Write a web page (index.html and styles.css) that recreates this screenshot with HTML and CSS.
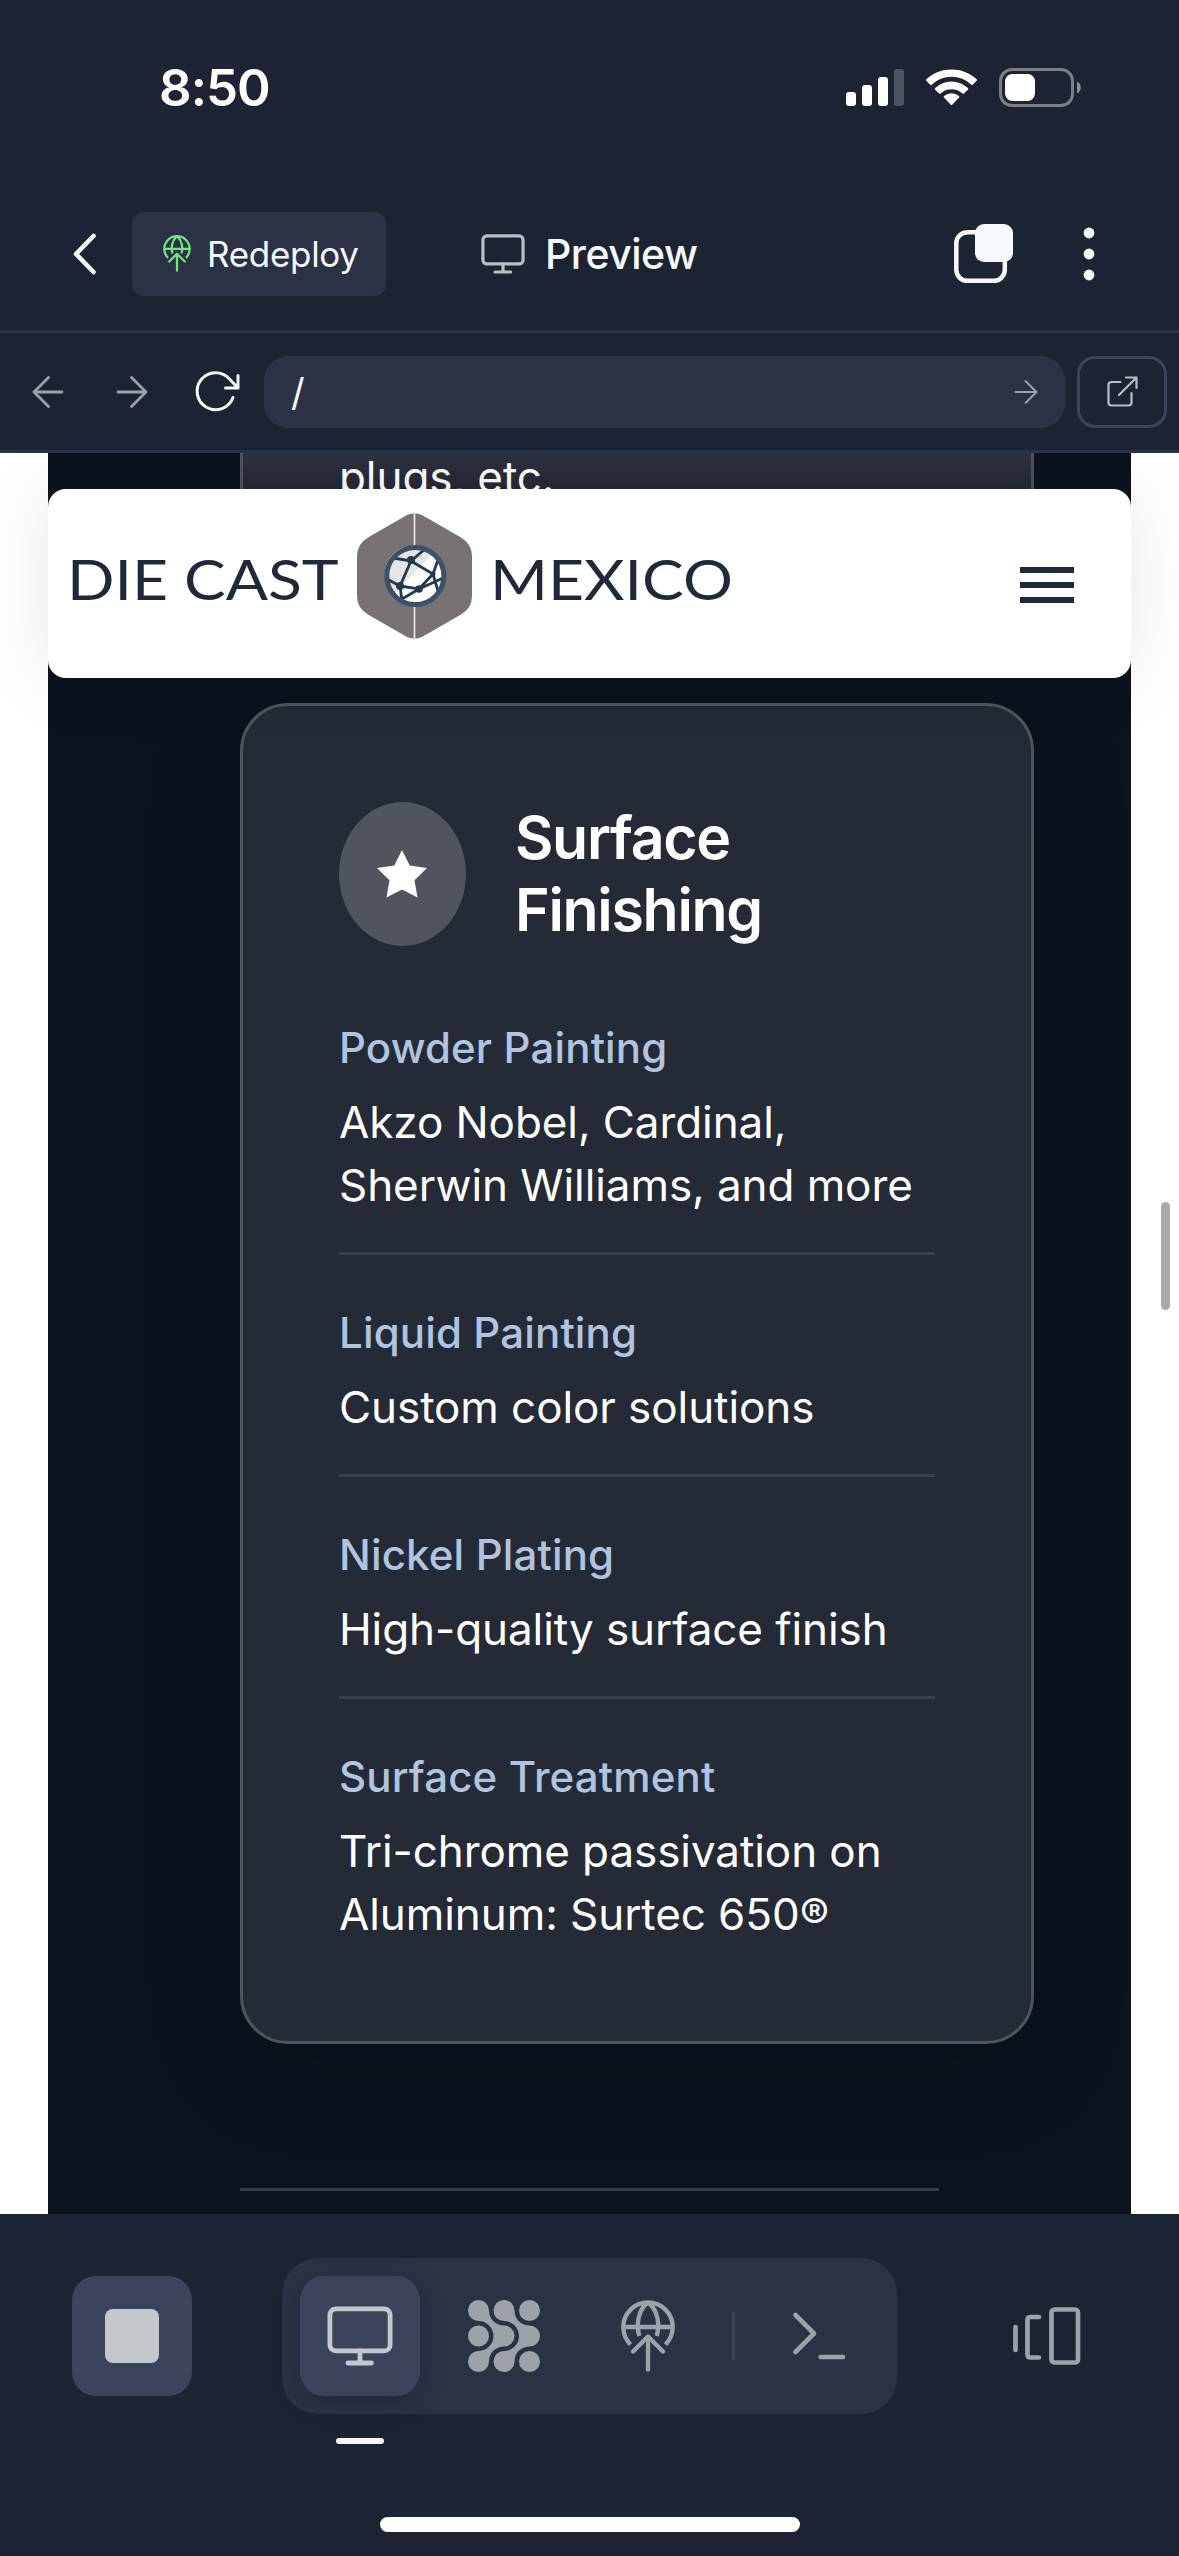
FILE: index.html
```html
<!DOCTYPE html>
<html lang="en">
<head>
<meta charset="utf-8">
<title>Preview</title>
<link rel="stylesheet" href="styles.css">
</head>
<body>
<svg width="0" height="0" class="defs" aria-hidden="true">
  <symbol id="globe-up" viewBox="0 0 54 72">
    <g fill="none" stroke="currentColor" stroke-width="4.4">
      <path d="M9.5 44.5A24.7 24.7 0 1 1 44.5 44.5M2.5 27H51.5M26 3C17 11 15 25 18.300 36M28 3C37 11 39 25 35.700 36"/>
      <path d="M27 37V69.500M12 51.500L27 36.500L42 51.500" stroke-linecap="round" stroke-linejoin="round"/>
    </g>
  </symbol>
  <symbol id="monitor" viewBox="0 0 66 60">
    <g fill="none" stroke="currentColor" stroke-width="4.800" stroke-linecap="round">
      <rect x="2.900" y="2.900" width="60.200" height="42" rx="6"/>
      <path d="M33 45V57M21 57H44.500"/>
    </g>
  </symbol>
</svg>
<main class="screen">
  <header class="status">
    <span class="time">8:50</span>
    <div class="indicators">
      <svg class="signal" viewBox="0 0 58 37" fill="#fff"><rect y="23" width="10" height="14" rx="3"/><rect x="16" y="16" width="10" height="21" rx="3"/><rect x="32" y="8" width="10" height="29" rx="3"/><rect x="48" width="10" height="37" rx="3" opacity=".22"/></svg>
      <svg class="wifi" viewBox="0 0 17 12" fill="#fff"><path d="M8.500 2.400c2.500 0 4.800.95 6.600 2.650.13.13.35.13.48 0l1.300-1.300a.36.36 0 000-.52c-4.680-4.300-12.100-4.300-16.770 0a.36.36 0 000 .52l1.300 1.300c.14.13.35.13.49 0A9.580 9.580 0 018.500 2.400z"/><path d="M8.500 6.600c1.360 0 2.670.5 3.670 1.420.14.13.35.13.49 0l1.300-1.300a.37.37 0 000-.53 7.900 7.900 0 00-10.900 0 .37.37 0 000 .53l1.300 1.300c.13.13.35.13.48 0A5.400 5.400 0 018.500 6.600z"/><path d="M11 9.330a.36.36 0 00-.01-.53 3.850 3.850 0 00-4.980 0 .36.36 0 000 .53l2.250 2.460c.13.13.35.13.48 0L11 9.330z"/></svg>
      <svg class="battery" viewBox="0 0 83 39"><rect x="1.500" y="1.500" width="72" height="36" rx="11.500" fill="none" stroke="#7b7e87" stroke-width="3"/><rect x="6" y="6" width="30" height="27" rx="7.500" fill="#fff"/><path d="M78 13.500C83 15.500 83 23.500 78 25.500Z" fill="#8a8d95"/></svg>
    </div>
  </header>

  <nav class="appbar">
    <svg class="back" viewBox="0 0 24 42" fill="none" stroke="#f5f9fc" stroke-width="4.600" stroke-linecap="round" stroke-linejoin="round"><path d="M20.500 3L3 21L20.500 39"/></svg>
    <div class="redeploy"><svg class="redeploy-icon"><use href="#globe-up"/></svg><span>Redeploy</span></div>
    <div class="title"><svg class="title-icon"><use href="#monitor"/></svg><span>Preview</span></div>
    <svg class="tabs" viewBox="0 0 60 60"><rect x="2.300" y="8.300" width="48.500" height="48.500" rx="11" fill="none" stroke="#f5f9fc" stroke-width="4.500"/><rect x="21" width="38" height="38" rx="9" fill="#f5f9fc"/></svg>
    <svg class="more" viewBox="0 0 12 54" fill="#f5f9fc"><circle cx="6" cy="6" r="5.400"/><circle cx="6" cy="27" r="5.400"/><circle cx="6" cy="48" r="5.400"/></svg>
  </nav>

  <nav class="urlbar">
    <svg class="arrow" viewBox="0 0 32 32"><path d="M30 16H2M16.500 1.500L2 16L16.500 30.500"/></svg>
    <svg class="arrow forward" viewBox="0 0 32 32"><path d="M2 16H30M15.500 1.500L30 16L15.500 30.500"/></svg>
    <svg class="reload" viewBox="0 0 44 42" fill="none" stroke="#f5f9fc" stroke-width="3" stroke-linecap="round" stroke-linejoin="round"><path d="M37 26.500A18.500 18.500 0 1 1 33.500 8L42 17M42 4.500V17H29.500"/></svg>
    <div class="address"><span>/</span><svg class="go" viewBox="0 0 32 32"><path d="M2 16H30M15.500 1.500L30 16L15.500 30.500"/></svg></div>
    <div class="external"><svg viewBox="0 0 31 31" fill="none" stroke="#b9bfc4" stroke-width="2.200" stroke-linecap="round" stroke-linejoin="round"><path d="M13.500 6H4.500Q1.500 6 1.500 9V26.500Q1.500 29.500 4.500 29.500H21.500Q24.500 29.500 24.500 26.500V17M12 19L29.500 1.500M19 1.500H29.500V12"/></svg></div>
  </nav>

  <section class="viewport">
    <div class="site">
      <article class="card previous"><p class="value">plugs, etc.</p></article>
      <article class="card">
        <div class="card-head">
          <div class="badge"><svg viewBox="0 0 50 48" fill="#fff"><path d="M25 0L32.700 15.500L50 18L37.500 30.200L40.500 47.500L25 39.400L9.500 47.500L12.500 30.200L0 18L17.300 15.500Z"/></svg></div>
          <h2>Surface<br>Finishing</h2>
        </div>
        <div class="item"><h3>Powder Painting</h3><p class="value">Akzo Nobel, Cardinal,<br>Sherwin Williams, and more</p></div>
        <div class="item"><h3>Liquid Painting</h3><p class="value">Custom color solutions</p></div>
        <div class="item"><h3>Nickel Plating</h3><p class="value">High-quality surface finish</p></div>
        <div class="item"><h3>Surface Treatment</h3><p class="value">Tri-chrome passivation on<br>Aluminum: Surtec 650®</p></div>
      </article>
      <hr class="rule">
    </div>
    <div class="site-header">
      <span class="brand die">DIE CAST</span>
      <svg class="emblem" viewBox="0 0 115 126">
        <path d="M50 2Q57.500-1.500 65 2L104 24.500Q115 31 115 43V83Q115 95 104 101.500L65 124Q57.500 127.500 50 124L11 101.500Q0 95 0 83V43Q0 31 11 24.500Z" fill="#787272"/>
        <path d="M57.500 0V126" stroke="#e6e3e0" stroke-width="1.800"/>
        <circle cx="58.300" cy="63" r="28.500" fill="#fff"/>
        <path d="M36 81A28 28 0 0 1 76 41Z" fill="#e5e5e5"/>
        <g stroke="#233a4f" stroke-width="2.800" fill="none"><path d="M36 45L54 48L68 36M54 48L43 73L30 66M54 48L76 61L62 76L43 73L45 88M62 76L86 65M76 61L82 44M76 61L81 78M45 86L62 76"/></g>
        <g fill="#233a4f"><circle cx="54" cy="47" r="4"/><circle cx="43" cy="73" r="4"/><circle cx="62" cy="76" r="3.800"/><circle cx="76" cy="61" r="2.500"/></g>
        <circle cx="58.300" cy="63" r="28.500" fill="none" stroke="#39536c" stroke-width="5"/>
      </svg>
      <span class="brand mexico">MEXICO</span>
      <div class="menu"><i></i><i></i><i></i></div>
    </div>
    <div class="scrollbar"></div>
  </section>

  <footer class="dock">
    <div class="tools">
      <div class="button stop"><i></i></div>
      <div class="group">
        <div class="button active"><svg class="dock-monitor"><use href="#monitor"/></svg><i class="marker"></i></div>
        <div class="button"><svg class="dots" viewBox="0 0 72 72" fill="currentColor"><path id="wave" d="M10.500 0A10.500 10.500 0 0 1 21 10.500C21 19 27.500 25.500 36 25.500A10.500 10.500 0 0 1 36 46.500C27.500 46.500 21 53 21 61.500A10.500 10.500 0 1 1 10.500 51A15 15 0 0 0 10.500 21A10.500 10.500 0 0 1 10.500 0Z"/><use href="#wave" x="25.500"/><circle cx="10.500" cy="36" r="10.500"/><circle cx="61.500" cy="10.500" r="10.500"/><circle cx="61.500" cy="61.500" r="10.500"/></svg></div>
        <div class="button"><svg class="dock-globe"><use href="#globe-up"/></svg></div>
        <i class="divider"></i>
        <div class="button"><svg class="terminal" viewBox="0 0 54 48" fill="none" stroke="currentColor" stroke-width="4.600" stroke-linecap="round" stroke-linejoin="round"><path d="M3.500 3L22 21.500L3.500 40M28.500 45H51"/></svg></div>
      </div>
      <svg class="panels" viewBox="0 0 70 60" fill="none" stroke="currentColor" stroke-width="4.700" stroke-linecap="round" stroke-linejoin="round"><path d="M3.500 21V44M27 11H18.500Q15.500 11 15.500 14V48.500Q15.500 51.500 18.500 51.500H27"/><rect x="39.500" y="3.500" width="26.500" height="53" rx="3"/></svg>
    </div>
    <div class="home"></div>
  </footer>
</main>
</body>
</html>
```
FILE: styles.css
```css
* { box-sizing: border-box; }
body { margin: 0; background: #1c2333; font-family: Inter, "Liberation Sans", sans-serif; }
svg { display: block; flex: none; overflow: visible; }
h2, h3, p { margin: 0; white-space: nowrap; }
.defs { position: absolute; }
.screen { width: 1179px; height: 2556px; display: flex; flex-direction: column; overflow: hidden; color: #f5f9fc; }

.status { height: 177px; padding: 0 98px 0 159px; display: flex; justify-content: space-between; align-items: flex-start; }
.time { margin-top: 57px; font-size: 51px; line-height: 62px; font-weight: 600; color: #fff; letter-spacing: -1px; }
.indicators { display: flex; align-items: center; margin-top: 68px; }
.signal { width: 58px; height: 37px; }
.wifi { width: 51px; height: 37px; margin: 0 22px; }
.battery { width: 83px; height: 39px; margin-right: -1px; }

.appbar { height: 156px; padding: 0 84px 0 73px; display: flex; align-items: center; border-bottom: 3px solid #2b3245; }
.back { width: 24px; height: 42px; }
.redeploy { width: 254px; height: 84px; margin-left: 35px; padding-left: 31px; border-radius: 12px; background: #2b3245; display: flex; align-items: center; gap: 16px; font-size: 35px; line-height: 50px; letter-spacing: -.3px; }
.redeploy-icon { width: 28px; height: 37px; color: #73e57f; }
.title { display: flex; align-items: center; gap: 20px; margin-left: 95px; font-size: 41px; line-height: 56px; font-weight: 550; letter-spacing: -.5px; }
.title-icon { width: 44px; height: 40px; color: #b9bfc4; }
.tabs { width: 60px; height: 60px; margin-left: auto; }
.more { width: 12px; height: 54px; margin-left: 69px; }

.urlbar { height: 120px; padding: 0 12px 0 32px; display: flex; align-items: center; border-bottom: 3px solid #2b3245; }
.arrow, .go { width: 32px; height: 32px; fill: none; stroke: #9da2a6; stroke-width: 2.8; stroke-linecap: round; stroke-linejoin: round; }
.forward { margin-left: 52px; }
.reload { width: 44px; height: 42px; margin-left: 48px; }
.address { width: 801px; height: 72px; margin-left: 24px; padding: 0 27px; border-radius: 24px; background: #2b3245; display: flex; align-items: center; justify-content: space-between; font-size: 38px; }
.go { width: 24px; height: 24px; }
.external { width: 90px; height: 72px; margin-left: 12px; border: 3px solid #3c445c; border-radius: 18px; display: flex; align-items: center; justify-content: center; }
.external svg { width: 31px; height: 31px; }

.viewport { position: relative; height: 1761px; background: #fff; overflow: hidden; padding: 0 48px; }
.site { height: 1761px; padding-left: 192px; background: #0c131f; overflow: hidden; color: #fff; }
.card { width: 794px; height: 1341px; padding: 96px; border: 3px solid #50535d; border-radius: 48px; background: #242a36; box-shadow: 0 24px 96px rgba(0, 0, 0, .2); }
.card.previous { height: 155px; margin-bottom: 95px; padding: 0 96px 96px; border-top: 0; border-radius: 0 0 48px 48px; background: linear-gradient(#2f3342, #252935 36px, #242a36); box-shadow: none; display: flex; flex-direction: column; justify-content: flex-end; }
.card-head { display: flex; gap: 49px; margin-bottom: 72px; }
.badge { width: 127px; height: 144px; border-radius: 50%; background: #50545f; display: flex; align-items: center; justify-content: center; }
.badge svg { width: 50px; height: 48px; margin-left: -2px; }
h2 { font-size: 59px; line-height: 72px; font-weight: 600; letter-spacing: -1.3px; }
.item { margin-bottom: 48px; padding-bottom: 35px; border-bottom: 3px solid #3a3f4b; }
.item:last-child { margin: 0; padding: 0; border: 0; }
h3 { margin-bottom: 13px; font-size: 42px; line-height: 60px; font-weight: 500; letter-spacing: .15px; color: #b0c4e0; }
.value { font-size: 44px; line-height: 63px; letter-spacing: -.08px; }
.rule { width: 699px; height: 3px; margin: 144px 0 0; border: 0; background: #3a3e4b; }

.site-header { position: absolute; left: 48px; top: 36px; width: 1083px; height: 189px; padding: 0 57px 0 19px; display: flex; align-items: flex-start; border-radius: 18px; background: #fff; box-shadow: 0 0 72px rgba(0, 0, 0, .1); color: #1e293b; }
.brand { width: 290px; margin-top: 58px; font: 56px/64px Lato, sans-serif; white-space: nowrap; transform: scaleX(1.115); transform-origin: left; }
.emblem { width: 115px; height: 126px; margin-top: 24px; }
.mexico { width: 240px; margin-left: 18px; }
.menu { width: 54px; margin: 78px 0 0 auto; display: grid; gap: 9px; }
.menu i { height: 6px; background: #1e293b; }
.scrollbar { position: absolute; right: 9px; top: 749px; width: 9px; height: 108px; border-radius: 5px; background: #aaa; }

.dock { height: 342px; padding-top: 44px; }
.tools { height: 156px; padding: 0 97px 0 72px; display: flex; align-items: center; color: #9da2a6; }
.button { width: 120px; height: 120px; border-radius: 24px; display: flex; align-items: center; justify-content: center; }
.stop { background: #3c445c; }
.stop i { width: 54px; height: 54px; border-radius: 8px; background: #c2c8cc; }
.group { width: 615px; height: 156px; margin-left: 90px; padding: 0 18px; border-radius: 36px; background: #2b3245; display: flex; align-items: center; gap: 24px; }
.active { position: relative; background: #3c445c; color: #c2c8cc; box-shadow: 0 6px 24px rgba(0, 0, 0, .18); }
.dock-monitor { width: 66px; height: 60px; }
.marker { position: absolute; left: 36px; top: 162px; width: 48px; height: 6px; border-radius: 3px; background: #f5f9fc; }
.dots { width: 72px; height: 72px; }
.dock-globe { width: 54px; height: 72px; }
.divider { width: 3px; height: 48px; background: #3c445c; }
.terminal { width: 54px; height: 48px; }
.panels { width: 70px; height: 60px; margin-left: auto; }
.home { width: 420px; height: 15px; margin: 103px auto 0; border-radius: 8px; background: #fff; }
```
